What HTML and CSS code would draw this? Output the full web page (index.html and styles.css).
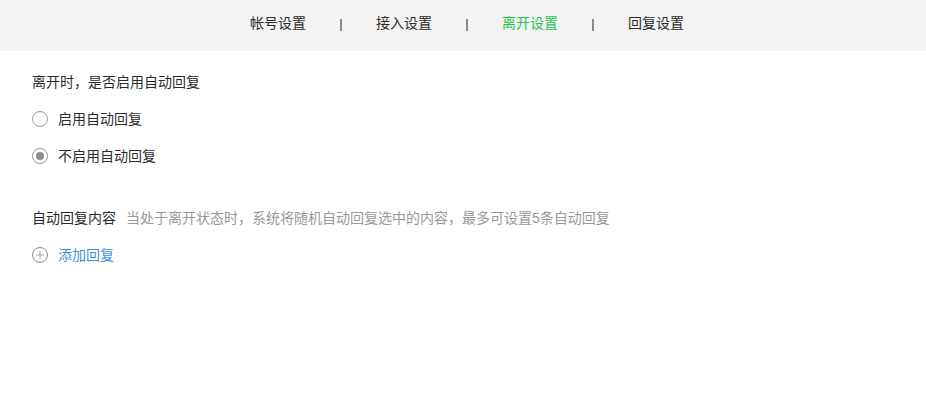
FILE: index.html
```html
<!DOCTYPE html>
<html lang="zh-CN">
<head>
    <meta charset="UTF-8">
    <title>离开设置</title>
    <link rel="stylesheet" href="styles.css">
</head>
<body>

    <!-- Top tabs -->
    <div class="tabs">
        <a class="tab">帐号设置</a>
        <span class="sep"></span>
        <a class="tab">接入设置</a>
        <span class="sep"></span>
        <a class="tab active">离开设置</a>
        <span class="sep"></span>
        <a class="tab">回复设置</a>
    </div>

    <div class="content">
        <p class="title">离开时，是否启用自动回复</p>
        <label class="radio-row"><span class="radio"></span>启用自动回复</label>
        <label class="radio-row"><span class="radio checked"></span>不启用自动回复</label>

        <div class="reply-head">
            <span class="reply-title">自动回复内容</span>
            <span class="hint">当处于离开状态时，系统将随机自动回复选中的内容，最多可设置5条自动回复</span>
        </div>
        <a class="add-row">
            <svg class="add-icon" width="16" height="16" viewBox="0 0 16 16">
                <circle cx="8" cy="8" r="7.5" fill="none" stroke="#8c8c8c" stroke-width="1"></circle>
                <path d="M8 4v8M4 8h8" fill="none" stroke="#a0a0a0" stroke-width="1"></path>
            </svg>
            添加回复
        </a>
    </div>

</body>
</html>
```

FILE: styles.css
```css
body {
    font-family: "Liberation Sans", "Noto Sans CJK SC", sans-serif;
    font-size: 14px;
    color: #2b2b2b;
    background-color: #fff;
    margin: 0;
}
.tabs {
    height: 51px;
    background-color: #f3f3f3;
    display: flex;
    justify-content: center;
    padding: 13px 0 0 8px;
    box-sizing: border-box;
    line-height: 20px;
}
.tab {
    width: 56px;
    white-space: nowrap;
}
.tab.active {
    color: #1cc94f;
}
.sep {
    width: 70px;
    display: flex;
    justify-content: center;
    align-items: flex-start;
    padding-top: 6px;
}
.sep::after {
    content: "";
    width: 2px;
    height: 12px;
    background-color: #8a8a8a;
}
.content {
    padding: 0 32px;
}
.title {
    margin: 21px 0 0;
    line-height: 20px;
}
.radio-row {
    display: flex;
    align-items: center;
    gap: 10px;
    line-height: 20px;
    margin-top: 17px;
}
.radio {
    width: 16px;
    height: 16px;
    border: 1px solid #999;
    border-radius: 50%;
    box-sizing: border-box;
    display: flex;
    align-items: center;
    justify-content: center;
}
.radio.checked::after {
    content: "";
    width: 8px;
    height: 8px;
    border-radius: 50%;
    background-color: #8c8c8c;
}
.reply-head {
    margin-top: 42px;
    line-height: 20px;
    display: flex;
    gap: 10px;
}
.hint {
    color: #999;
}
.add-row {
    display: flex;
    align-items: center;
    gap: 10px;
    line-height: 20px;
    margin-top: 17px;
    color: #3f8fdf;
}
```
